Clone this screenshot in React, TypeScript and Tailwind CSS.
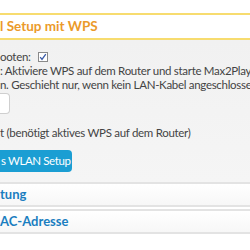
import React from "react";

export default function App() {
  const font = { fontFamily: 'Lato, "DejaVu Sans", sans-serif' };
  return (
    <div className="w-[250px] h-[250px] overflow-hidden bg-white text-[#444]" style={font}>
      <div className="h-[13px]" />
      <div className="border-y-2 border-[#f7dc6f] bg-white h-[27px] flex items-center overflow-hidden">
        <span className="text-[13.5px] font-bold text-[#eb9a2a] whitespace-nowrap">l Setup mit WPS</span>
      </div>
      <div className="bg-gradient-to-b from-[#f1f1f1] to-[#f5f5f5] h-[142px] pt-[9px] text-[11.5px] tracking-[-0.3px] whitespace-nowrap overflow-hidden">
        <div className="flex items-center h-[15px] gap-[7px]">
          <span>ooten:</span>
          <span className="w-[10px] h-[10px] border border-[#8a8a8a] bg-white flex items-center justify-center">
            <svg width="8" height="8" viewBox="0 0 8 8"><path d="M1.2 4.2 L3 6.5 L6.8 1.2" stroke="#3b5ca8" strokeWidth="1.3" fill="none" /></svg>
          </span>
        </div>
        <div className="leading-[14px]">: Aktiviere WPS auf dem Router und starte Max2Play</div>
        <div className="leading-[14px]">n. Geschieht nur, wenn kein LAN-Kabel angeschlossen</div>
        <div className="mt-[1px] w-[10px] h-[21px] border border-[#cfcfcf] border-l-0 rounded-r-[4px] bg-white" />
        <div className="mt-[12px] leading-[14px]">t (benötigt aktives WPS auf dem Router)</div>
        <div className="mt-[10px] w-[72px] h-[22px] bg-[#1b9ed3] rounded-r-[4px] text-white flex items-center pl-[1px] text-[11.5px] tracking-[-0.4px]">s WLAN Setup</div>
      </div>
      <div className="border-y-2 border-[#e3e3e3] bg-gradient-to-b from-white to-[#f7f7f7] h-[25px] flex items-center">
        <span className="text-[13px] font-bold text-[#1a7ec0]">tung</span>
      </div>
      <div className="mt-[2px] border-y-2 border-[#e3e3e3] bg-gradient-to-b from-white to-[#f7f7f7] h-[25px] flex items-center">
        <span className="text-[13px] font-bold text-[#1a7ec0]">AC-Adresse</span>
      </div>
    </div>
  );
}
